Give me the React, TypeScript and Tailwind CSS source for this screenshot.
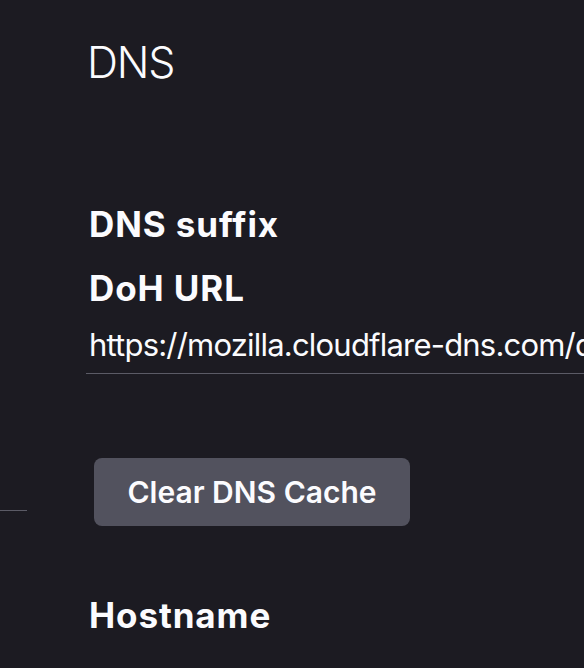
import React from "react";

// Sidebar stub: only the separator line is visible in this crop
const Sidebar: React.FC = () => (
  <div className="w-[27px] shrink-0 flex flex-col">
    <div className="h-[510px]" />
    <div className="h-px bg-[#5b5b66]" />
  </div>
);

const Label: React.FC<{ children: React.ReactNode; className?: string }> = ({ children, className }) => (
  <div className={`text-[35px] leading-[40px] font-bold tracking-[0.9px] text-[#fbfbfe] ${className ?? ""}`}>
    {children}
  </div>
);

export default function App() {
  return (
    <div
      className="w-[584px] h-[668px] overflow-hidden bg-[#1c1b22] text-[#fbfbfe] flex"
      style={{ fontFamily: "Inter, 'Noto Sans', sans-serif" }}
    >
      <Sidebar />
      <div className="flex-1 min-w-0 pl-[62px] flex flex-col">
        <h1 className="mt-[36px] -ml-[2px] text-[43px] leading-[52px] font-light tracking-[-1.2px]">DNS</h1>

        <Label className="mt-[116px]">DNS suffix</Label>
        <Label className="mt-[24px]">DoH URL</Label>

        <div className="mt-[17px] w-[560px] border-b border-[#5b5b66] pb-[8px] -ml-[3px] pl-[3px]">
          <div className="text-[31px] leading-[40px] tracking-[-0.8px] whitespace-nowrap">
            https://mozilla.cloudflare-dns.com/dns-query
          </div>
        </div>

        <div className="mt-[84px] pl-[5px]">
          <button className="h-[68px] w-[316px] rounded-[8px] bg-[#52525e] text-[30px] font-semibold text-[#fbfbfe]">
            Clear DNS Cache
          </button>
        </div>

        <Label className="mt-[69px]">Hostname</Label>
      </div>
    </div>
  );
}
